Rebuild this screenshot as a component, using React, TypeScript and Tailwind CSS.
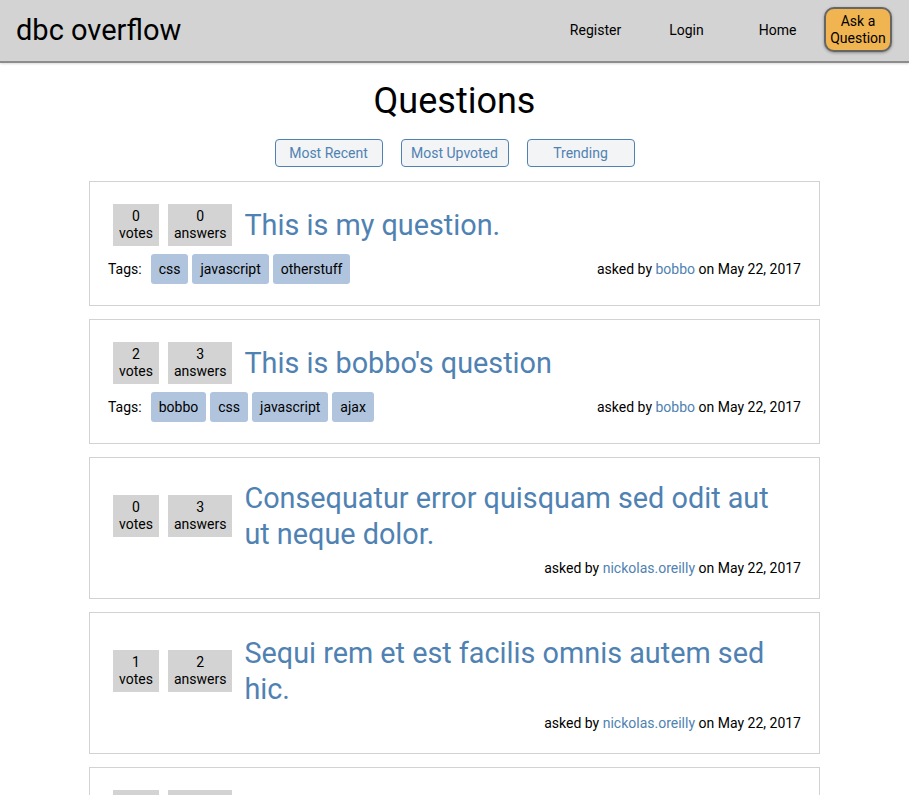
import React from 'react';

type Question = {
  id: number;
  votes: number;
  answers: number;
  title: string;
  tags: string[];
  author: string;
  date: string;
};

const questions: Question[] = [
  { id: 1, votes: 0, answers: 0, title: 'This is my question.', tags: ['css', 'javascript', 'otherstuff'], author: 'bobbo', date: 'May 22, 2017' },
  { id: 2, votes: 2, answers: 3, title: "This is bobbo's question", tags: ['bobbo', 'css', 'javascript', 'ajax'], author: 'bobbo', date: 'May 22, 2017' },
  { id: 3, votes: 0, answers: 3, title: 'Consequatur error quisquam sed odit aut ut neque dolor.', tags: [], author: 'nickolas.oreilly', date: 'May 22, 2017' },
  { id: 4, votes: 1, answers: 2, title: 'Sequi rem et est facilis omnis autem sed hic.', tags: [], author: 'nickolas.oreilly', date: 'May 22, 2017' },
  { id: 5, votes: 0, answers: 1, title: 'Voluptatem quia dolores ut.', tags: [], author: 'nickolas.oreilly', date: 'May 22, 2017' },
];

const Stat = ({ n, label }: { n: number; label: string }) => (
  <div className="bg-[#d3d3d3] px-[6px] py-[4px] mx-[4.5px] text-center text-[14px] leading-[17px] text-black">
    <div>{n}</div>
    <div>{label}</div>
  </div>
);

const QuestionCard = ({ q }: { q: Question }) => (
  <div className="border border-[#d2d2d2] pl-[18px] pr-[18px] pt-[22px] pb-[21px]">
    <div className="flex items-center">
      <div className="flex shrink-0 ml-[0.5px]">
        <Stat n={q.votes} label="votes" />
        <Stat n={q.answers} label="answers" />
      </div>
      <a href="#" className="ml-[7.5px] pr-[20px] text-[28.8px] leading-[36px] text-[#4f82b2]">
        {q.title}
      </a>
    </div>
    <div className="flex items-center justify-between mt-[8px] text-[14px] text-black">
      {q.tags.length > 0 ? (
        <div className="flex items-center">
          <span className="mr-[9px]">Tags:</span>
          <div className="flex gap-[4px]">
            {q.tags.map(t => (
              <span key={t} className="bg-[#b0c4de] rounded-[3px] px-[8px] py-[6.5px] leading-[17px]">{t}</span>
            ))}
          </div>
        </div>
      ) : <div />}
      <div className="leading-[17px]">
        asked by <a href="#" className="text-[#4f82b2]">{q.author}</a> on {q.date}
      </div>
    </div>
  </div>
);

export default function App() {
  return (
    <div className="min-h-screen bg-white font-['Roboto',sans-serif]">
      <header className="h-[63px] bg-[#d3d3d3] border-b-2 border-[#8c8c8c] shadow-[0_1px_2px_rgba(0,0,0,0.15)] flex items-center justify-between pl-[16px] pr-[17px]">
        <h1 className="text-[29px] text-black">dbc overflow</h1>
        <nav className="flex items-center text-[14px] text-black">
          <a href="#" className="w-[91px] text-center">Register</a>
          <a href="#" className="w-[91px] text-center">Login</a>
          <a href="#" className="w-[91px] text-center">Home</a>
          <button className="ml-[1px] -mt-[2px] w-[68px] h-[45px] rounded-[10px] border-2 border-[#666] bg-[#f0b450] shadow-[0_1px_3px_rgba(0,0,0,0.35)] text-[14px] leading-[17px] text-black">
            Ask a<br />Question
          </button>
        </nav>
      </header>

      <main className="w-[731px] mx-auto">
        <h2 className="text-center text-[36px] leading-[42px] text-black pt-[17px]">Questions</h2>
        <div className="flex justify-center gap-[18px] mt-[17px] mb-[14px]">
          {['Most Recent', 'Most Upvoted', 'Trending'].map(label => (
            <button key={label} className="w-[108px] h-[28px] rounded-[4px] border border-[#4f82b2] bg-[#f3f4f6] text-[14px] text-[#4f82b2]">
              {label}
            </button>
          ))}
        </div>
        <div className="flex flex-col gap-[13px] pb-6">
          {questions.map(q => <QuestionCard key={q.id} q={q} />)}
        </div>
      </main>
    </div>
  );
}
